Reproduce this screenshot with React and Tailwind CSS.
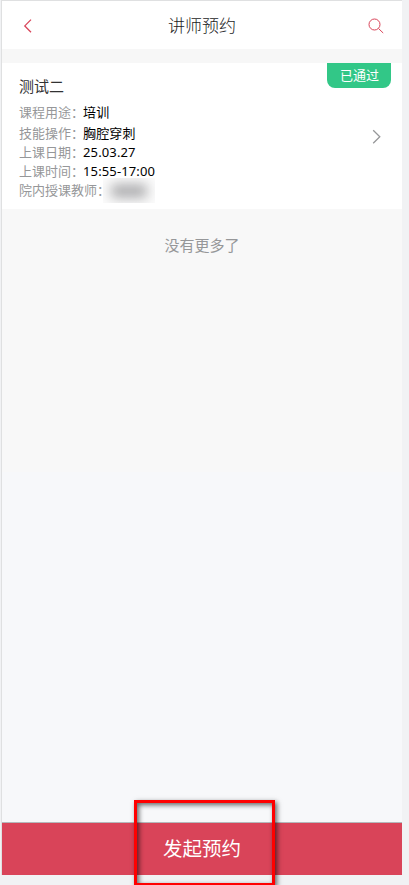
const details = [
    { label: '课程用途：', value: '培训', row: 'h-[21px]' },
    { label: '技能操作：', value: '胸腔穿刺', row: 'h-[19px]' },
    { label: '上课日期：', value: '25.03.27', row: 'h-[19px]' },
    { label: '上课时间：', value: '15:55-17:00', row: 'h-[19px]' },
];

function Header() {
    return (
        <header className="h-12 shrink-0 bg-white flex items-center justify-between pl-[21px] pr-[18px] pt-px">
            <button type="button" aria-label="返回" className="w-4 h-4">
                <svg viewBox="0 0 16 16" className="w-4 h-4 block" fill="none" stroke="#d94459" strokeWidth="1.3">
                    <path d="M8 1.6L1.8 7.9L8 14.2" />
                </svg>
            </button>
            <h1 className="text-[17px] leading-6 text-[#1c1c1d] font-light pr-[3px] pt-px">讲师预约</h1>
            <button type="button" aria-label="搜索" className="w-4 h-4">
                <svg viewBox="0 0 16 16" className="w-4 h-4 block" fill="none" stroke="#d94459" strokeWidth="1">
                    <circle cx="6.5" cy="6.5" r="5.5" />
                    <path d="M10.5 10.5L15.2 15" />
                </svg>
            </button>
        </header>
    );
}

function BookingCard() {
    return (
        <section className="h-[146px] shrink-0 bg-white flex justify-between pl-[17px] pr-[11px]">
            <div className="pt-3 text-[13px]">
                <h2 className="text-[15px] leading-[22px] h-[28px] text-[#323233]">测试二</h2>
                {details.map((item) => (
                    <div key={item.label} className={`flex items-start leading-[19px] ${item.row}`}>
                        <span className="w-16 whitespace-nowrap text-[#969799]">{item.label}</span>
                        <span className="text-black tracking-[0.01em]">{item.value}</span>
                    </div>
                ))}
                <div className="flex items-center h-[19px] leading-[19px]">
                    <span className="w-[84px] whitespace-nowrap text-[#969799]">院内授课教师：</span>
                    {/* teacher name is masked */}
                    <span className="w-[52px] h-[25px] shrink-0 bg-[#fbfbfb] overflow-hidden flex items-center justify-center">
                        <span className="w-[36px] h-[14px] rounded bg-[#aeaeb0] blur-[6px]" />
                    </span>
                </div>
            </div>
            <div className="w-16 flex flex-col">
                <span className="h-[25px] rounded-b-lg bg-[#32c787] text-white text-[13px] leading-[25px] text-center pl-px">已通过</span>
                <svg viewBox="0 0 16 16" className="w-4 h-4 mt-[41px] ml-[42px]" fill="none" stroke="#969799" strokeWidth="1.3">
                    <path d="M4.2 1.2L10.8 7.7L4.2 14.2" />
                </svg>
            </div>
        </section>
    );
}

function App() {
    return (
        <div className="relative w-[409px] h-[885px] overflow-hidden bg-[#f1f2f4] pl-px font-['Noto_Sans','Noto_Sans_CJK_SC',sans-serif]">
            <div className="w-[401px] h-[875px] flex flex-col border-l border-t border-[#dfe0e1] bg-[#f7f8fa]">
                <Header />
                <div className="h-[14px] shrink-0 bg-[#f7f7f7]" />
                <BookingCard />
                <div className="h-[263px] shrink-0 bg-[#f8f8f8] pt-6 text-center text-[15px] leading-6 text-[#969799]">
                    没有更多了
                </div>
                <button
                    type="button"
                    className="mt-auto h-[53px] shrink-0 border-t border-[#b5b8bb] bg-[#d94459] text-white text-[19.5px] leading-[52px]"
                >
                    发起预约
                </button>
            </div>

            {/* Highlight frame over the submit button */}
            <div className="absolute left-[134px] top-[800px] w-[141px] h-[86px] border-[3px] border-[#ff0000] shadow-[2px_2px_5px_rgba(0,0,0,0.6),inset_2px_2px_5px_rgba(0,0,0,0.6)] pointer-events-none" />
        </div>
    );
}

export default App;
